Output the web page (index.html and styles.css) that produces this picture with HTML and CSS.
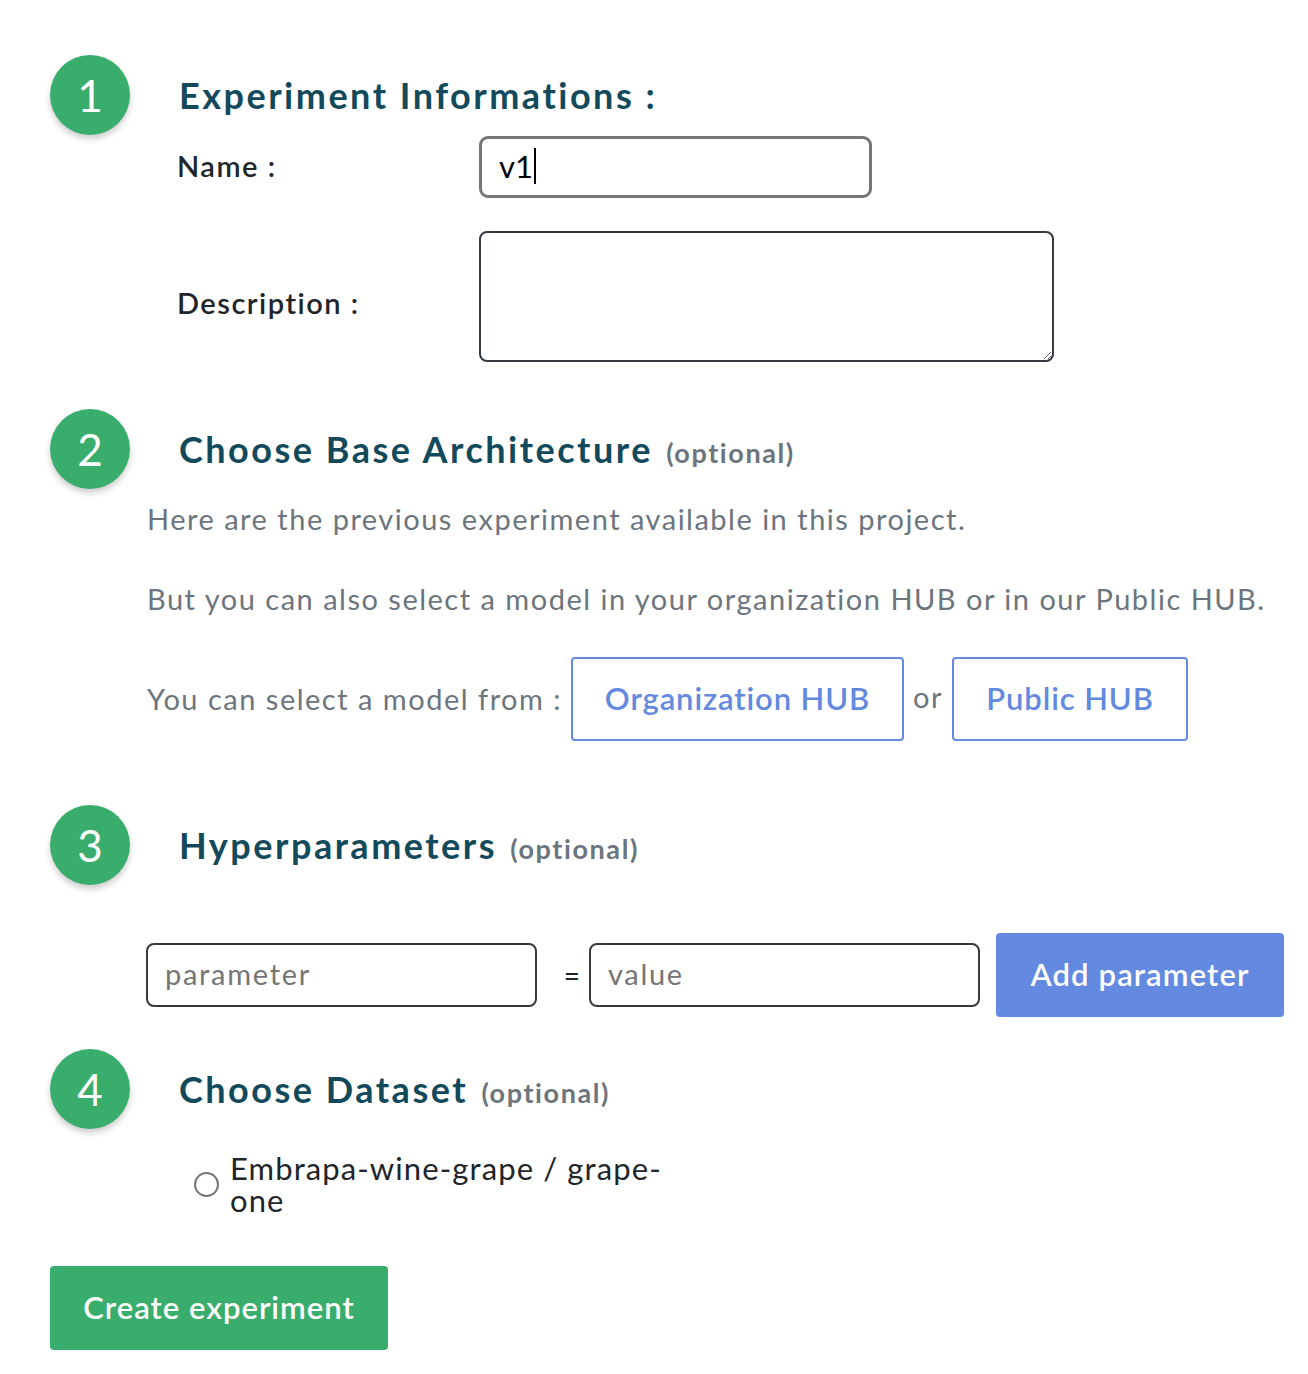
FILE: index.html
```html
<!DOCTYPE html>
<html>
<head>
    <meta charset="UTF-8">
    <title>Create Experiment</title>
    <link rel="stylesheet" href="styles.css">
</head>
<body>
    <div class="page">
        <!-- Step 1 : experiment informations -->
        <div class="step-header">
            <div class="step-number">1</div>
            <h2 class="step-title">Experiment Informations :</h2>
        </div>
        <div class="info-form">
            <label class="info-label" for="exp-name">Name :</label>
            <div class="name-field"><span class="name-value">v1</span><span class="caret"></span></div>
            <label class="info-label desc-label" for="exp-desc">Description :</label>
            <textarea class="desc-input" id="exp-desc"></textarea>
        </div>

        <!-- Step 2 : base architecture -->
        <div class="step-header step-2">
            <div class="step-number">2</div>
            <h2 class="step-title">Choose Base Architecture <span class="optional">(optional)</span></h2>
        </div>
        <div class="step-body">
            <p class="hint">Here are the previous experiment available in this project.</p>
            <p class="hint">But you can also select a model in your organization HUB or in our Public HUB.</p>
            <div class="hub-row">
                <span class="hint">You can select a model from :</span>
                <button class="hub-button org-button">Organization HUB</button>
                <span class="hint or">or</span>
                <button class="hub-button public-button">Public HUB</button>
            </div>
        </div>

        <!-- Step 3 : hyperparameters -->
        <div class="step-header step-3">
            <div class="step-number">3</div>
            <h2 class="step-title">Hyperparameters <span class="optional">(optional)</span></h2>
        </div>
        <div class="step-body param-row">
            <input class="param-input" type="text" placeholder="parameter">
            <span class="equals">=</span>
            <input class="param-input" type="text" placeholder="value">
            <button class="add-button">Add parameter</button>
        </div>

        <!-- Step 4 : dataset -->
        <div class="step-header step-4">
            <div class="step-number">4</div>
            <h2 class="step-title">Choose Dataset <span class="optional">(optional)</span></h2>
        </div>
        <div class="dataset-list">
            <label class="dataset-option">
                <span class="radio"></span>
                <span class="dataset-name">Embrapa-wine-grape / grape-one</span>
            </label>
        </div>

        <button class="create-button">Create experiment</button>
    </div>
</body>
</html>
```

FILE: styles.css
```css
body {
    margin: 0;
    font-family: Lato, "Open Sans", Arial, sans-serif;
    background-color: #fff;
    color: #212529;
}
.page {
    padding: 55px 0 0 50px;
}
.step-header {
    display: flex;
    align-items: center;
    height: 80px;
}
.step-number {
    width: 80px;
    height: 80px;
    border-radius: 50%;
    background-color: #39ad6c;
    color: #fff;
    font-size: 44px;
    display: flex;
    align-items: center;
    justify-content: center;
    box-shadow: 0 4px 6px rgba(0, 0, 0, 0.2);
    flex-shrink: 0;
}
.step-title {
    margin: 0 0 0 49px;
    font-size: 36px;
    font-weight: 700;
    letter-spacing: 2.5px;
    color: #124a5c;
}
.optional {
    font-size: 27px;
    color: #6c757d;
    letter-spacing: 1.6px;
    margin-left: 2px;
}

/* step 1 */
.info-form {
    display: grid;
    grid-template-columns: 302px auto;
    align-items: center;
    padding-left: 127px;
    margin-top: 1px;
    row-gap: 33px;
}
.info-label {
    font-size: 29px;
    font-weight: 600;
    letter-spacing: 1.5px;
    color: #212529;
    padding-bottom: 4px;
}
.desc-label {
    padding: 12px 0 0;
}
.name-field {
    box-sizing: border-box;
    width: 393px;
    height: 62px;
    border: 3px solid #767676;
    border-radius: 9px;
    padding-left: 17px;
    padding-bottom: 3px;
    display: flex;
    align-items: center;
    font-size: 31px;
    color: #000;
}
.caret {
    display: inline-block;
    width: 2px;
    height: 36px;
    background-color: #000;
    margin-left: 1px;
}
.desc-input {
    box-sizing: border-box;
    width: 575px;
    height: 131px;
    border: 2px solid #343a40;
    border-radius: 8px;
    resize: vertical;
    font-family: inherit;
}

/* step 2 */
.step-2 {
    margin-top: 47px;
}
.step-body {
    padding-left: 97px;
}
.hint {
    font-size: 29px;
    letter-spacing: 1.5px;
    color: #6c757d;
    margin: 0;
    line-height: 40px;
}
.step-2 + .step-body .hint:first-child {
    margin-top: 10px;
}
.step-2 + .step-body p + p {
    margin-top: 40px;
}
.hub-row {
    display: flex;
    align-items: center;
    margin-top: 38px;
}
.hub-row .hint {
    padding-bottom: 10px;
}
.hub-row .or {
    padding-bottom: 4px;
}
.hub-button {
    box-sizing: border-box;
    height: 84px;
    background-color: #fff;
    border: 2px solid #6389e0;
    border-radius: 4px;
    color: #6389e0;
    font-family: inherit;
    font-size: 31px;
    font-weight: 600;
    letter-spacing: 0.9px;
    padding-bottom: 4px;
    cursor: pointer;
}
.org-button {
    width: 333px;
    margin-left: 9px;
}
.public-button {
    width: 236px;
}
.or {
    margin: 0 9px;
}

/* step 3 */
.step-3 {
    margin-top: 64px;
}
.param-row {
    display: flex;
    align-items: center;
    margin-top: 48px;
}
.param-input {
    box-sizing: border-box;
    width: 391px;
    height: 64px;
    border: 2px solid #343a40;
    border-radius: 8px;
    padding: 0 17px 4px;
    font-family: inherit;
    font-size: 29px;
    letter-spacing: 1.7px;
    color: #212529;
}
.param-input::placeholder {
    color: #757575;
}
.param-input:first-child {
    margin-left: -1px;
}
.equals {
    box-sizing: border-box;
    font-size: 28px;
    width: 52px;
    text-align: right;
    padding-right: 9px;
    color: #212529;
}
.add-button {
    box-sizing: border-box;
    width: 288px;
    height: 84px;
    margin-left: 16px;
    background-color: #6389e0;
    border: none;
    border-radius: 4px;
    color: #fff;
    font-family: inherit;
    font-size: 31px;
    font-weight: 600;
    letter-spacing: 1.1px;
    padding-bottom: 4px;
    cursor: pointer;
}

/* step 4 */
.step-4 {
    margin-top: 32px;
}
.dataset-list {
    padding-left: 144px;
    margin-top: 23px;
}
.dataset-option {
    display: flex;
    align-items: center;
    width: 480px;
}
.radio {
    box-sizing: border-box;
    width: 25px;
    height: 25px;
    border: 2px solid #767676;
    border-radius: 50%;
    flex-shrink: 0;
    margin-right: 11px;
}
.dataset-name {
    font-size: 31px;
    line-height: 32px;
    letter-spacing: 1.1px;
    color: #212529;
}
.create-button {
    display: block;
    box-sizing: border-box;
    width: 338px;
    height: 84px;
    margin-top: 50px;
    background-color: #39ad6c;
    border: none;
    border-radius: 4px;
    color: #fff;
    font-family: inherit;
    font-size: 31px;
    font-weight: 600;
    letter-spacing: 1px;
    padding-bottom: 4px;
    cursor: pointer;
}
```
